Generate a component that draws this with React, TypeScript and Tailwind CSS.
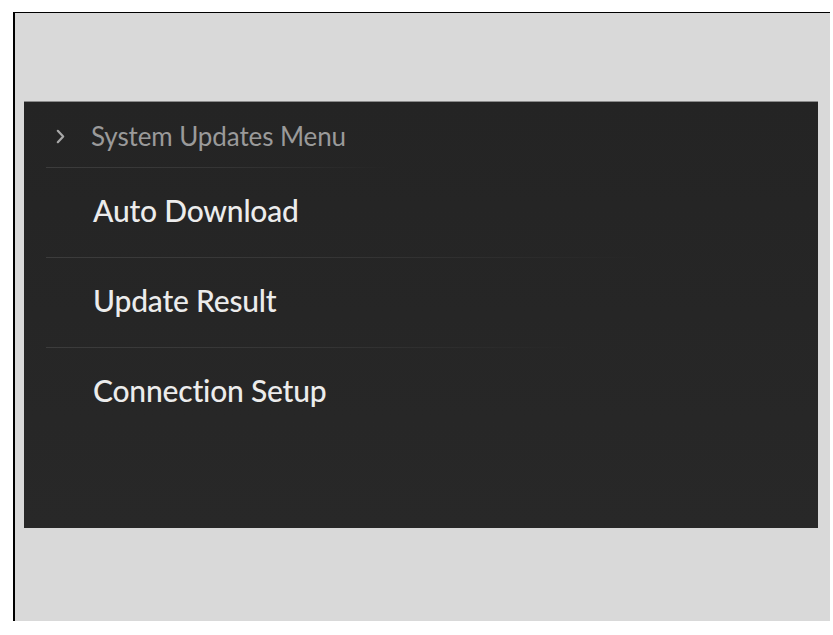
const items = ['Auto Download', 'Update Result', 'Connection Setup']

// divider widths fade out at different lengths in the reference
const dividerWidths = ['w-[345px]', 'w-[600px]', 'w-[530px]']

function Chevron() {
  return (
    <svg width="9" height="15" viewBox="0 0 9 15" fill="none" className="shrink-0">
      <path d="M1.8 1.8 L7.2 7.5 L1.8 13.2" stroke="#a8a8a8" strokeWidth="2.2" strokeLinecap="round" strokeLinejoin="round" />
    </svg>
  )
}

function Divider({ width }: { width: string }) {
  return <div className={`h-px ml-[22px] ${width} bg-gradient-to-r from-[#3c3c3c] via-[#353535] to-transparent`} />
}

export default function App() {
  return (
    <div className="min-h-screen bg-white pt-3 pl-[13px] font-['Lato','Liberation_Sans',sans-serif]">
      <div className="w-[817px] h-[609px] bg-[#d9d9d9] border-t-[1.5px] border-l-2 border-black pt-[88px] pl-[9px]">
        <div className="w-[794px] h-[427px] bg-gradient-to-b from-[#242424] via-[#262626] to-[#282828] border-t border-[#8a8a8a]">
          <div className="h-[65px] flex items-center pl-[32px] gap-[26px] pt-[4px]">
            <Chevron />
            <span className="text-[26px] text-[#9a9a9a] tracking-[-0.1px]">System Updates Menu</span>
          </div>
          <Divider width={dividerWidths[0]} />
          {items.map((label, i) => (
            <div key={label}>
              <div className="h-[89px] flex items-center pl-[69px] pb-[4px]">
                <span className="text-[30px] font-medium text-[#ececec] tracking-[-0.2px]">{label}</span>
              </div>
              {i < items.length - 1 && <Divider width={dividerWidths[i + 1]} />}
            </div>
          ))}
        </div>
      </div>
    </div>
  )
}
